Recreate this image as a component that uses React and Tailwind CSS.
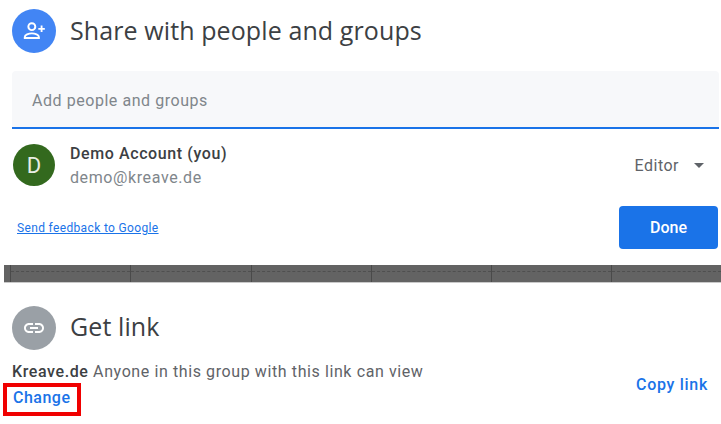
const BAND_COLUMNS = [120, 121, 120, 120, 120, 110]

function PersonAddIcon() {
  return (
    <svg width="26" height="26" viewBox="0 0 24 24" fill="none" stroke="white" strokeWidth="1.8">
      <circle cx="10" cy="8" r="3.2" />
      <path d="M3.500 18.500v-1c0-2 3.500-3.300 6.500-3.300s6.500 1.300 6.500 3.300v1z" />
      <path d="M19 7v6M16 10h6" strokeWidth="1.700" />
    </svg>
  )
}

function LinkIcon() {
  return (
    <svg width="24" height="24" viewBox="0 0 24 24" fill="white">
      <path d="M3.900 12c0-1.710 1.390-3.100 3.100-3.100h4V7H7c-2.760 0-5 2.240-5 5s2.240 5 5 5h4v-1.900H7c-1.710 0-3.100-1.390-3.100-3.100zM8 13h8v-2H8v2zm9-6h-4v1.900h4c1.710 0 3.100 1.390 3.100 3.100s-1.390 3.100-3.100 3.100h-4V17h4c2.760 0 5-2.240 5-5s-2.240-5-5-5z" />
    </svg>
  )
}

export default function App() {
  return (
    <div className="w-[721px] h-[424px] overflow-hidden bg-white font-['Roboto',sans-serif]">
      {/* Share section */}
      <div className="flex items-center gap-[14px] pl-3 pt-[9px]">
        <div className="w-11 h-11 rounded-full bg-[#4285f4] flex items-center justify-center">
          <PersonAddIcon />
        </div>
        <h1 className="text-[25px] leading-[42px] pb-0.5 text-[#3c4043] tracking-[0.1px] font-['Open_Sans',sans-serif]">Share with people and groups</h1>
      </div>

      <div className="ml-3 mt-[18px] w-[707px] h-[58px] bg-[#f7f8fa] border-b-2 border-[#1a73e8] rounded-t pl-5 pt-1 flex items-center text-base tracking-[0.55px] text-[#80868b]">
        Add people and groups
      </div>

      <div className="flex items-center justify-between mt-[13px] pl-[13px] pr-[17px]">
        <div className="flex items-center gap-[15px]">
          <div className="w-[42px] h-[42px] mb-0.5 rounded-full bg-[#33691e] flex items-center justify-center text-[22px] text-[#e8eee4]">D</div>
          <div>
            <div className="text-base leading-6 font-medium tracking-[0.6px] text-[#3c4043]">Demo Account (you)</div>
            <div className="text-base leading-6 tracking-[0.6px] text-[#80868b]">demo@kreave.de</div>
          </div>
        </div>
        <div className="flex items-center gap-[15px] text-base tracking-[0.5px] text-[#5f6368]">
          Editor
          <span className="w-0 h-0 mb-0.5 border-x-[5px] border-x-transparent border-t-[5px] border-t-[#5f6368]" />
        </div>
      </div>

      <div className="flex items-center justify-between mt-4 pl-[17px] pr-[3px]">
        <a className="pt-px text-xs underline tracking-[0.35px] text-[#1a73e8]">Send feedback to Google</a>
        <button className="w-[99px] h-[43px] pt-px rounded bg-[#1a73e8] text-white text-base font-medium">Done</button>
      </div>

      {/* Dark band, what's behind the dialogs */}
      <div className="ml-1 mt-4 h-[18px] bg-[#636363] border-b border-[#c9c9c9] flex pl-[6px]">
        {BAND_COLUMNS.map((w, i) => (
          <div key={i} style={{ width: w }} className="h-full border-l border-[#4a4a4a]">
            <div className="h-[7px] border-b border-dashed border-[#4f4f4f]" />
          </div>
        ))}
      </div>

      {/* Get link section */}
      <div className="flex items-center gap-[14px] pl-3 mt-[23px]">
        <div className="w-11 h-11 rounded-full bg-[#9aa0a6] flex items-center justify-center">
          <LinkIcon />
        </div>
        <h2 className="text-[25px] leading-[40px] pb-1 text-[#3c4043] tracking-[0.1px] font-['Open_Sans',sans-serif]">Get link</h2>
      </div>

      <div className="flex items-center justify-between mt-[11px] pr-[13px]">
        <div>
          <div className="pl-3 text-base leading-[22px] tracking-[0.6px] text-[#5f6368]">
            <span className="font-medium text-[#3c4043]">Kreave.de</span> Anyone in this group with this link can view
          </div>
          <div className="ml-[3px] w-[78px] h-[33px] pb-1 border-4 border-[#f00000] flex items-center pl-1.5 text-base font-medium tracking-[0.5px] text-[#1a73e8]">
            Change
          </div>
        </div>
        <a className="pb-2 text-base font-medium tracking-[0.7px] text-[#1a73e8]">Copy link</a>
      </div>
    </div>
  )
}
